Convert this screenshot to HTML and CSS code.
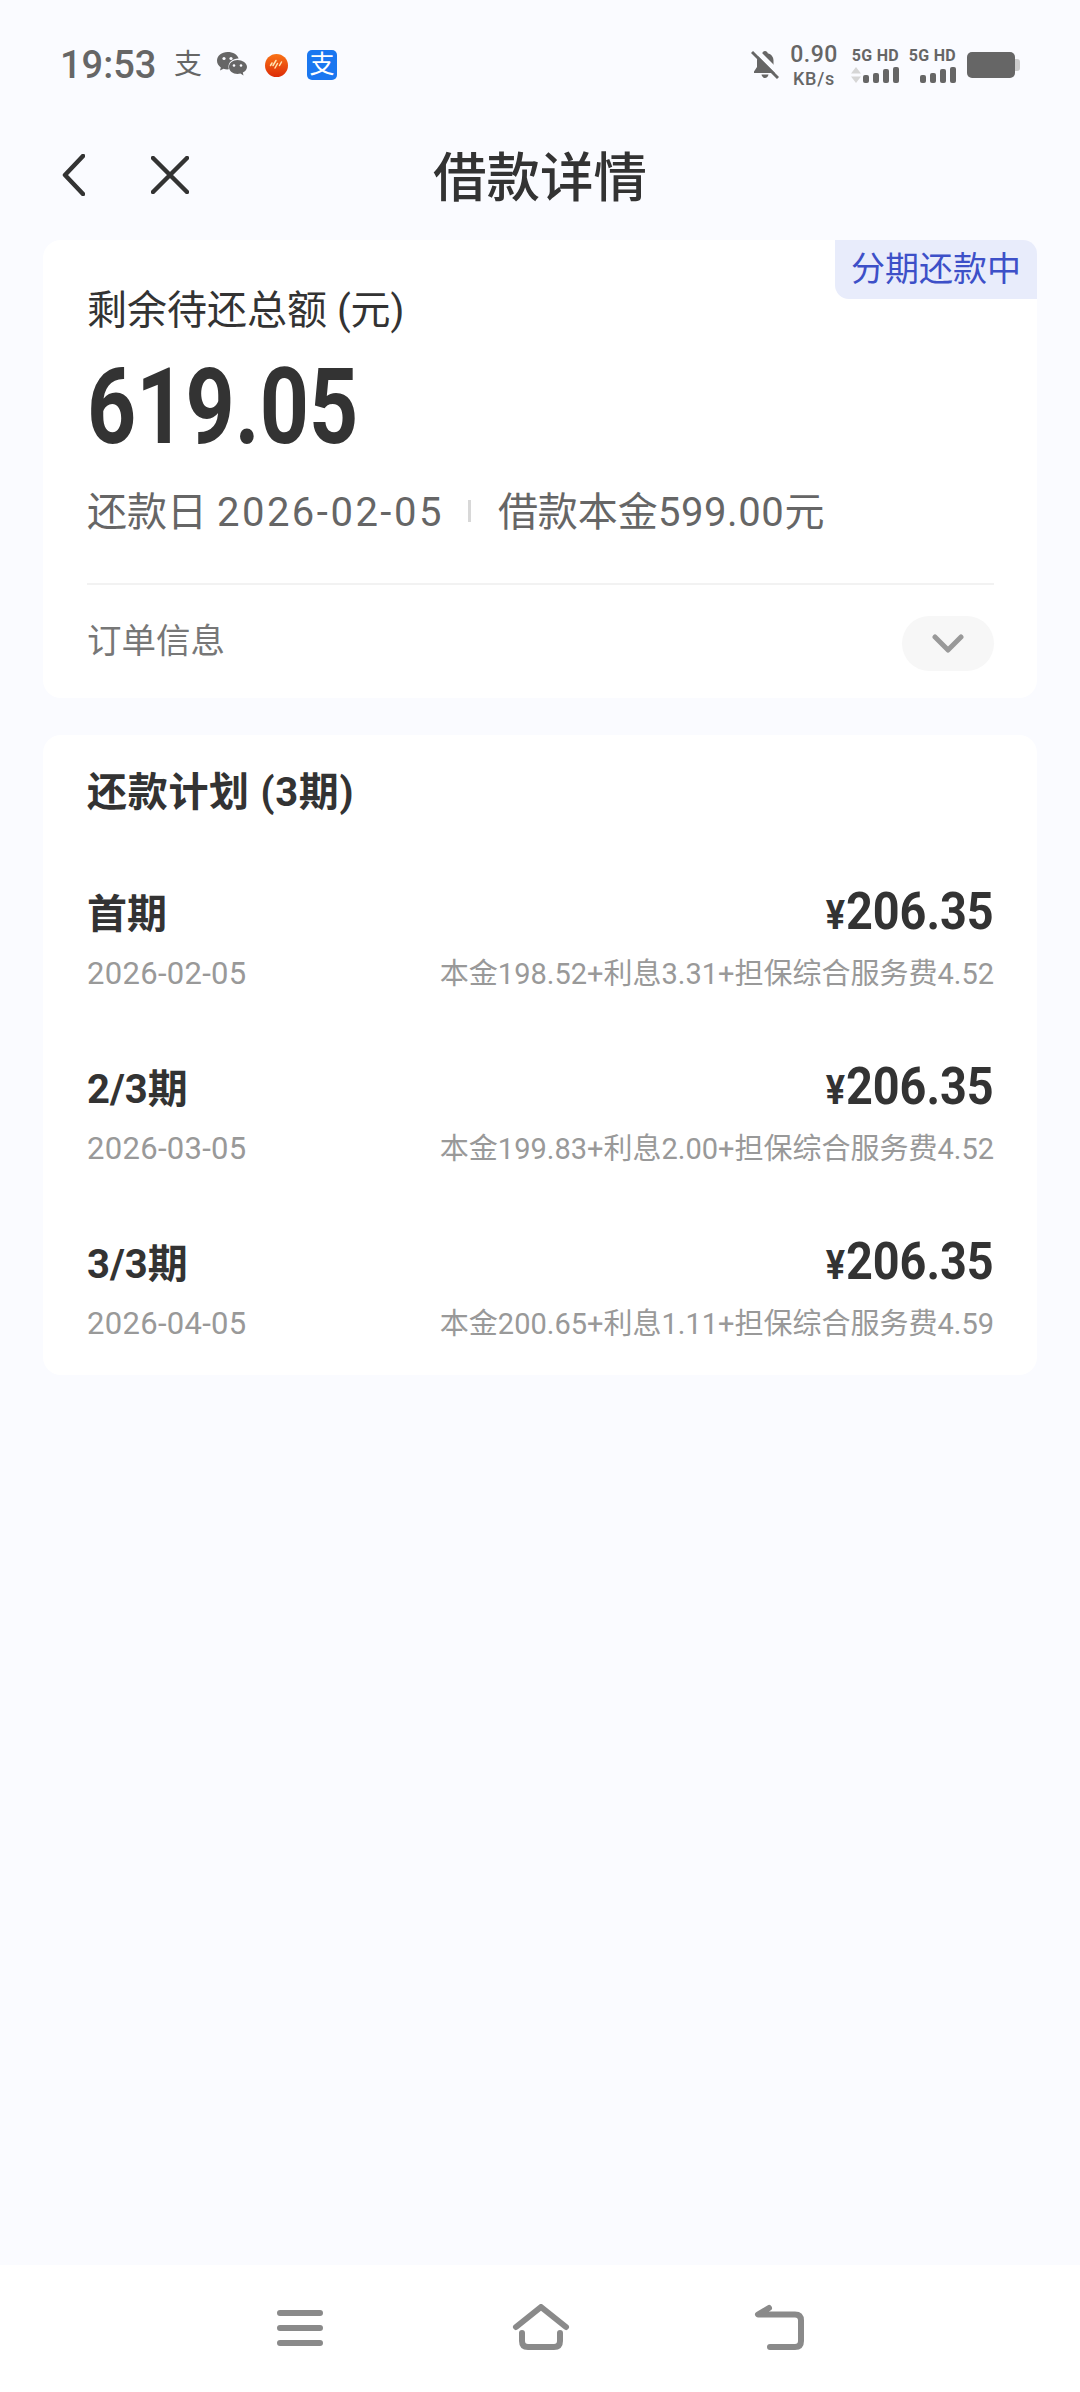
FILE: index.html
```html
<!DOCTYPE html>
<html lang="zh-CN">
<head>
  <meta charset="UTF-8">
  <meta name="viewport" content="width=device-width, initial-scale=1.0">
  <title>借款详情</title>
  <link rel="stylesheet" href="styles.css">
</head>
<body>

<!-- 状态栏 -->
<div class="status-bar">
  <div class="status-left">
    <span class="time">19:53</span>
    <span class="notify-zhi">支</span>
    <svg class="icon-wechat" width="30" height="26" viewBox="0 0 30 26">
      <path class="wechat-back" d="M10.500 0C4.700 0 0 3.900 0 8.700c0 2.700 1.500 5.100 3.800 6.700L3 18.500l3.500-1.700c1.200.4 2.500.6 3.900.6.500 0 1-.1 1.500-.1-.3-.9-.4-1.700-.4-2.500 0-4.600 4.200-8.200 9.500-8.200h.6C20.700 2.700 16 0 10.500 0z"/>
      <path class="wechat-back" d="M20.500 8C15.800 8 12 11.100 12 15s3.800 7 8.500 7c1 0 2-.1 2.900-.4l3.100 1.900-.7-2.900c2.500-1.300 4.200-3.400 4.200-5.600 0-3.900-4.700-7-9.500-7z"/>
      <circle class="wechat-eye" cx="7" cy="6.500" r="1.600"/>
      <circle class="wechat-eye" cx="14" cy="6.500" r="1.600"/>
      <circle class="wechat-eye" cx="17" cy="13.500" r="1.300"/>
      <circle class="wechat-eye" cx="24" cy="13.500" r="1.300"/>
    </svg>
    <svg class="icon-orange" width="23" height="23" viewBox="0 0 23 23">
      <defs>
        <linearGradient id="orangeFill" x1="0" y1="0" x2="0" y2="1">
          <stop offset="0" stop-color="#f97316"/>
          <stop offset="1" stop-color="#dd2c08"/>
        </linearGradient>
      </defs>
      <circle cx="11.500" cy="11.500" r="11.500" fill="url(#orangeFill)"/>
      <path d="M7 9l-1.500 2.500M11 6.500l-3 5M12.500 9.500l-2.500 4.500M16.500 8l-2 3.500" stroke="#ffe3b0" stroke-width="1.500" stroke-linecap="round" fill="none"/>
    </svg>
    <span class="alipay-tile">支</span>
  </div>
  <div class="status-right">
    <svg class="icon-bell" width="28" height="30" viewBox="0 0 28 30">
      <path d="M14 1c-1.500 0-2.500 1-2.700 2.200C7.800 4.200 6 7 6 10.500V17l-3 4.500v1.500h22v-1.500L22.500 18V10.500c0-3.500-2-6.300-5.800-7.300C16.500 2 15.500 1 14 1zM10.500 24.500c.4 2 1.800 3.500 3.500 3.500s3.100-1.500 3.500-3.500z"/>
      <path class="bell-cut" d="M1 1.500l26 26"/>
      <path class="bell-slash" d="M1 2l26 26"/>
    </svg>
    <div class="net-speed">
      <span class="speed-num">0.90</span>
      <span class="speed-unit">KB/s</span>
    </div>
    <div class="sim">
      <span class="sim-label">5G HD</span>
      <div class="sim-row">
        <svg class="sim-arrows" width="10" height="16" viewBox="0 0 10 16">
          <path d="M5 0l5 6.500H0zM5 16l5-6.500H0z"/>
        </svg>
        <div class="bars"><i class="bar-1"></i><i class="bar-2"></i><i class="bar-3"></i><i class="bar-4"></i></div>
      </div>
    </div>
    <div class="sim">
      <span class="sim-label">5G HD</span>
      <div class="sim-row">
        <div class="bars"><i class="bar-1"></i><i class="bar-2"></i><i class="bar-3"></i><i class="bar-4"></i></div>
      </div>
    </div>
    <div class="battery"><div class="battery-body"></div><div class="battery-nub"></div></div>
  </div>
</div>

<!-- 标题栏 -->
<div class="title-bar">
  <div class="title-actions">
    <svg class="icon-back" width="23" height="42" viewBox="0 0 23 42">
      <path d="M21 2L3 21l18 19"/>
    </svg>
    <svg class="icon-close" width="38" height="38" viewBox="0 0 38 38">
      <path d="M2 2l34 34M36 2L2 36"/>
    </svg>
  </div>
  <h1 class="page-title">借款详情</h1>
  <div></div>
</div>

<div class="content">
  <!-- 待还总额 -->
  <section class="card summary">
    <span class="badge">分期还款中</span>
    <div class="summary-label">剩余待还总额 (元)</div>
    <div class="summary-amount">619.05</div>
    <div class="summary-meta">
      <span>还款日 <span class="meta-date">2026-02-05</span></span>
      <i class="meta-sep"></i>
      <span>借款本金<span class="meta-money">599.00</span>元</span>
    </div>
    <div class="order-row">
      <span class="order-label">订单信息</span>
      <span class="expand-btn">
        <svg width="32" height="20" viewBox="0 0 32 20"><path d="M3 3l13 13L29 3"/></svg>
      </span>
    </div>
  </section>

  <!-- 还款计划 -->
  <section class="card plan">
    <h2 class="plan-title">还款计划 (3期)</h2>
    <div class="plan-row">
      <div class="plan-line">
        <span class="plan-name">首期</span>
        <span class="plan-amount"><small>¥</small>206.35</span>
      </div>
      <div class="plan-line plan-sub">
        <span class="plan-date">2026-02-05</span>
        <span>本金198.52+利息3.31+担保综合服务费4.52</span>
      </div>
    </div>
    <div class="plan-row">
      <div class="plan-line">
        <span class="plan-name">2/3期</span>
        <span class="plan-amount"><small>¥</small>206.35</span>
      </div>
      <div class="plan-line plan-sub">
        <span class="plan-date">2026-03-05</span>
        <span>本金199.83+利息2.00+担保综合服务费4.52</span>
      </div>
    </div>
    <div class="plan-row">
      <div class="plan-line">
        <span class="plan-name">3/3期</span>
        <span class="plan-amount"><small>¥</small>206.35</span>
      </div>
      <div class="plan-line plan-sub">
        <span class="plan-date">2026-04-05</span>
        <span>本金200.65+利息1.11+担保综合服务费4.59</span>
      </div>
    </div>
  </section>
</div>

<!-- 底部导航 -->
<div class="nav-bar">
  <svg class="nav-icon" width="48" height="44" viewBox="0 0 48 44">
    <path d="M4 9h40M4 24h40M4 39h40"/>
  </svg>
  <svg class="nav-icon nav-home" width="60" height="46" viewBox="0 0 60 46">
    <path d="M5 23L30 3l25 20"/>
    <path d="M11 29v8q0 6 6 6h26q6 0 6-6v-8"/>
  </svg>
  <svg class="nav-icon" width="52" height="46" viewBox="0 0 52 46">
    <path d="M16 4L5 10.500h37q6 0 6 6V37q0 6-6 6H17"/>
  </svg>
</div>

</body>
</html>
```
FILE: styles.css
```css
* {
  box-sizing: border-box;
}

body {
  margin: 0;
  width: 1080px;
  height: 2392px;
  display: flex;
  flex-direction: column;
  overflow: hidden;
  background-color: #fafbff;
  color: #333;
  font-family: Roboto, "Noto Sans CJK SC", sans-serif;
}

/* status bar */
.status-bar {
  height: 110px;
  padding: 20px 60px 0 60px;
  display: flex;
  align-items: center;
  justify-content: space-between;
  color: #666;
}

.status-left,
.status-right {
  display: flex;
  align-items: center;
}

.time {
  font-size: 38px;
  font-weight: 500;
  width: 114px;
}

.notify-zhi {
  font-size: 28px;
  width: 43px;
  line-height: 30px;
}

.icon-wechat {
  fill: #666;
  margin-right: 18px;
}

.wechat-eye {
  fill: #fafbff;
}

.icon-orange {
  margin-right: 19px;
}

.alipay-tile {
  width: 30px;
  height: 30px;
  background-color: #1a77f0;
  border-radius: 5px;
  color: #fff;
  font-size: 25px;
  line-height: 29px;
  text-align: center;
}

.icon-bell {
  fill: #666;
  margin-right: 11px;
}

.bell-cut {
  stroke: #fafbff;
  stroke-width: 5;
  transform: translate(3px, -2px);
}

.bell-slash {
  stroke: #666;
  stroke-width: 3;
}

.net-speed {
  display: flex;
  flex-direction: column;
  align-items: center;
  width: 48px;
  margin-right: 13px;
}

.speed-num {
  font-size: 23px;
  line-height: 27px;
  font-weight: 500;
  letter-spacing: 0.500px;
}

.speed-unit {
  font-size: 18px;
  line-height: 21px;
  font-weight: 500;
  letter-spacing: 0.800px;
}

.sim {
  display: flex;
  flex-direction: column;
  align-items: flex-end;
  width: 48px;
  margin-right: 9px;
}

.sim-label {
  font-size: 16px;
  line-height: 18px;
  font-weight: 700;
  letter-spacing: 0.300px;
  white-space: nowrap;
}

.sim-row {
  display: flex;
  align-items: flex-end;
  justify-content: space-between;
  width: 100%;
  height: 18px;
}

.sim-arrows {
  fill: #d6d6d6;
}

.bars {
  display: flex;
  align-items: flex-end;
  gap: 4px;
  margin-left: auto;
}

.bars i {
  display: block;
  width: 6px;
  background-color: #666;
  border-radius: 2px;
}

.bar-1 { height: 8px; }
.bar-2 { height: 10px; }
.bar-3 { height: 14px; }
.bar-4 { height: 16px; }

.battery {
  display: flex;
  align-items: center;
  margin-left: 2px;
}

.battery-body {
  width: 48px;
  height: 26px;
  background-color: #666;
  border-radius: 5px;
}

.battery-nub {
  width: 5px;
  height: 12px;
  background-color: #ccc;
  border-radius: 0 3px 3px 0;
}

/* title bar */
.title-bar {
  height: 130px;
  display: grid;
  grid-template-columns: 1fr auto 1fr;
  align-items: center;
}

.title-actions {
  display: flex;
  align-items: center;
  gap: 66px;
  padding-left: 62px;
}

.icon-back path,
.icon-close path {
  fill: none;
  stroke: #333;
  stroke-width: 4.500;
  stroke-linecap: round;
  stroke-linejoin: round;
}

.page-title {
  margin: 0 0 3px 0;
  font-size: 53.500px;
  font-weight: 500;
}

/* cards */
.content {
  flex: 1;
  padding: 0 43px;
  display: flex;
  flex-direction: column;
  gap: 37px;
}

.card {
  background-color: #fff;
  border-radius: 18px;
  padding: 0 43px 0 44px;
}

.summary {
  position: relative;
  height: 458px;
}

.badge {
  position: absolute;
  top: 0;
  right: 0;
  width: 202px;
  height: 59px;
  background-color: #e8ecfb;
  border-radius: 0 14px 0 14px;
  color: #3d50c8;
  font-size: 34px;
  line-height: 58px;
  text-align: center;
}

.summary-label {
  padding-top: 45px;
  font-size: 40px;
  line-height: 52px;
}

.summary-amount {
  margin-top: 14px;
  font-size: 106px;
  font-weight: 700;
  line-height: 112px;
  width: max-content;
  transform: scaleX(0.81);
  transform-origin: left center;
}

.summary-meta {
  margin-top: 18px;
  height: 56px;
  display: flex;
  align-items: center;
  color: #666;
  font-size: 40px;
}

.meta-date {
  letter-spacing: 2.500px;
}

.meta-money {
  letter-spacing: 0.600px;
}

.meta-sep {
  width: 3px;
  height: 22px;
  margin: 4px 27px 0 24px;
  background-color: #d8d8d8;
}

.order-row {
  margin-top: 46px;
  height: 110px;
  border-top: 2px solid #f2f2f2;
  display: flex;
  align-items: center;
  justify-content: space-between;
}

.order-label {
  margin-top: -3px;
  color: #777;
  font-size: 34.500px;
}

.expand-btn {
  width: 92px;
  height: 55px;
  margin-top: 9px;
  border-radius: 28px;
  background-color: #f7f7f7;
  display: flex;
  align-items: center;
  justify-content: center;
}

.expand-btn path {
  fill: none;
  stroke: #999;
  stroke-width: 5;
  stroke-linecap: round;
  stroke-linejoin: round;
}

.plan {
  height: 640px;
}

.plan-title {
  margin: 0;
  padding-top: 32px;
  font-size: 40px;
  font-weight: 700;
  letter-spacing: 0.700px;
  line-height: 52px;
}

.plan-row {
  height: 175px;
}

.plan-line {
  display: flex;
  align-items: center;
  justify-content: space-between;
}

.plan-row .plan-line:first-child {
  padding-top: 60px;
  height: 124px;
}

.plan-name {
  font-size: 40px;
  font-weight: 700;
}

.plan-amount {
  font-size: 52px;
  font-weight: 700;
  transform: scaleX(0.9);
  transform-origin: right center;
}

.plan-amount small {
  font-size: 40px;
  margin-right: 1px;
}

.plan-sub {
  margin-top: 11px;
  color: #999;
  font-size: 29px;
  line-height: 40px;
}

.plan-date {
  font-size: 31px;
  letter-spacing: 0.300px;
}

/* bottom nav */
.nav-bar {
  height: 127px;
  background-color: #fff;
  display: flex;
  align-items: flex-start;
  justify-content: center;
  padding-top: 39px;
}

.nav-home {
  margin: 0 182px 0 187px;
}

.nav-icon path {
  fill: none;
  stroke: #8a8a8a;
  stroke-width: 6;
  stroke-linecap: round;
  stroke-linejoin: round;
}
```
